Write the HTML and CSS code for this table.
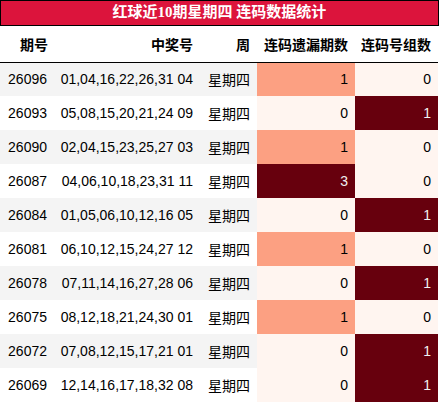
FILE: index.html
```html
<!DOCTYPE html>
<html lang="zh">
<head>
    <meta charset="UTF-8">
    <meta name="viewport" content="width=device-width, initial-scale=1.0">
    <title>红球近10期星期四 连码数据统计</title>
    <link rel="stylesheet" href="styles.css">
</head>
<body>
    <main class="main">
        <div class="caption">红球近10期星期四 连码数据统计</div>
        <table class="stats">
            <colgroup>
                <col class="c-no">
                <col class="c-nums">
                <col class="c-week">
                <col class="c-miss">
                <col class="c-group">
            </colgroup>
            <thead>
                <tr>
                    <th>期号</th>
                    <th>中奖号</th>
                    <th>周</th>
                    <th>连码遗漏期数</th>
                    <th>连码号组数</th>
                </tr>
            </thead>
            <tbody>
                <tr>
                    <td>26096</td><td>01,04,16,22,26,31 04</td><td>星期四</td>
                    <td class="mid">1</td><td class="low">0</td>
                </tr>
                <tr>
                    <td>26093</td><td>05,08,15,20,21,24 09</td><td>星期四</td>
                    <td class="low">0</td><td class="high">1</td>
                </tr>
                <tr>
                    <td>26090</td><td>02,04,15,23,25,27 03</td><td>星期四</td>
                    <td class="mid">1</td><td class="low">0</td>
                </tr>
                <tr>
                    <td>26087</td><td>04,06,10,18,23,31 11</td><td>星期四</td>
                    <td class="high">3</td><td class="low">0</td>
                </tr>
                <tr>
                    <td>26084</td><td>01,05,06,10,12,16 05</td><td>星期四</td>
                    <td class="low">0</td><td class="high">1</td>
                </tr>
                <tr>
                    <td>26081</td><td>06,10,12,15,24,27 12</td><td>星期四</td>
                    <td class="mid">1</td><td class="low">0</td>
                </tr>
                <tr>
                    <td>26078</td><td>07,11,14,16,27,28 06</td><td>星期四</td>
                    <td class="low">0</td><td class="high">1</td>
                </tr>
                <tr>
                    <td>26075</td><td>08,12,18,21,24,30 01</td><td>星期四</td>
                    <td class="mid">1</td><td class="low">0</td>
                </tr>
                <tr>
                    <td>26072</td><td>07,08,12,15,17,21 01</td><td>星期四</td>
                    <td class="low">0</td><td class="high">1</td>
                </tr>
                <tr>
                    <td>26069</td><td>12,14,16,17,18,32 08</td><td>星期四</td>
                    <td class="low">0</td><td class="high">1</td>
                </tr>
            </tbody>
        </table>
    </main>
</body>
</html>
```

FILE: styles.css
```css
*{
    margin: 0;
    padding: 0;
    box-sizing: border-box;
}
body {
    background-color: white;
    color: #000;
    font-family: "Liberation Sans", "Noto Sans CJK SC", sans-serif;
    font-size: 14px;
}
.main {
    width: 439px;
}
.caption {
    height: 26px;
    border: 1px solid black;
    background-color: #dc143c;
    color: white;
    font-family: "Liberation Serif", "Noto Sans CJK SC", serif;
    font-weight: bold;
    font-size: 15px;
    line-height: 23px;
    text-align: center;
}
.stats {
    width: 438px;
    border-collapse: collapse;
    table-layout: fixed;
}
.c-no { width: 55px; }
.c-nums { width: 145px; }
.c-week { width: 57px; }
.c-miss { width: 98px; }
.c-group { width: 83px; }
.stats th {
    height: 36px;
    padding: 0 7px 0 0;
    text-align: right;
    font-weight: bold;
    font-family: "Noto Sans CJK SC", sans-serif;
    border-bottom: 1px solid black;
}
.stats td {
    height: 34px;
    padding: 0 7px 0 0;
    text-align: right;
    white-space: nowrap;
}
.stats td:first-child {
    padding-right: 8px;
}
.stats tbody tr:nth-child(odd) td {
    background-color: #f4f4f4;
}
.stats tbody tr td.low {
    background-color: #fff5f0;
}
.stats tbody tr td.mid {
    background-color: #fca082;
}
.stats tbody tr td.high {
    background-color: #67000d;
    color: #f1f1f1;
}
```
